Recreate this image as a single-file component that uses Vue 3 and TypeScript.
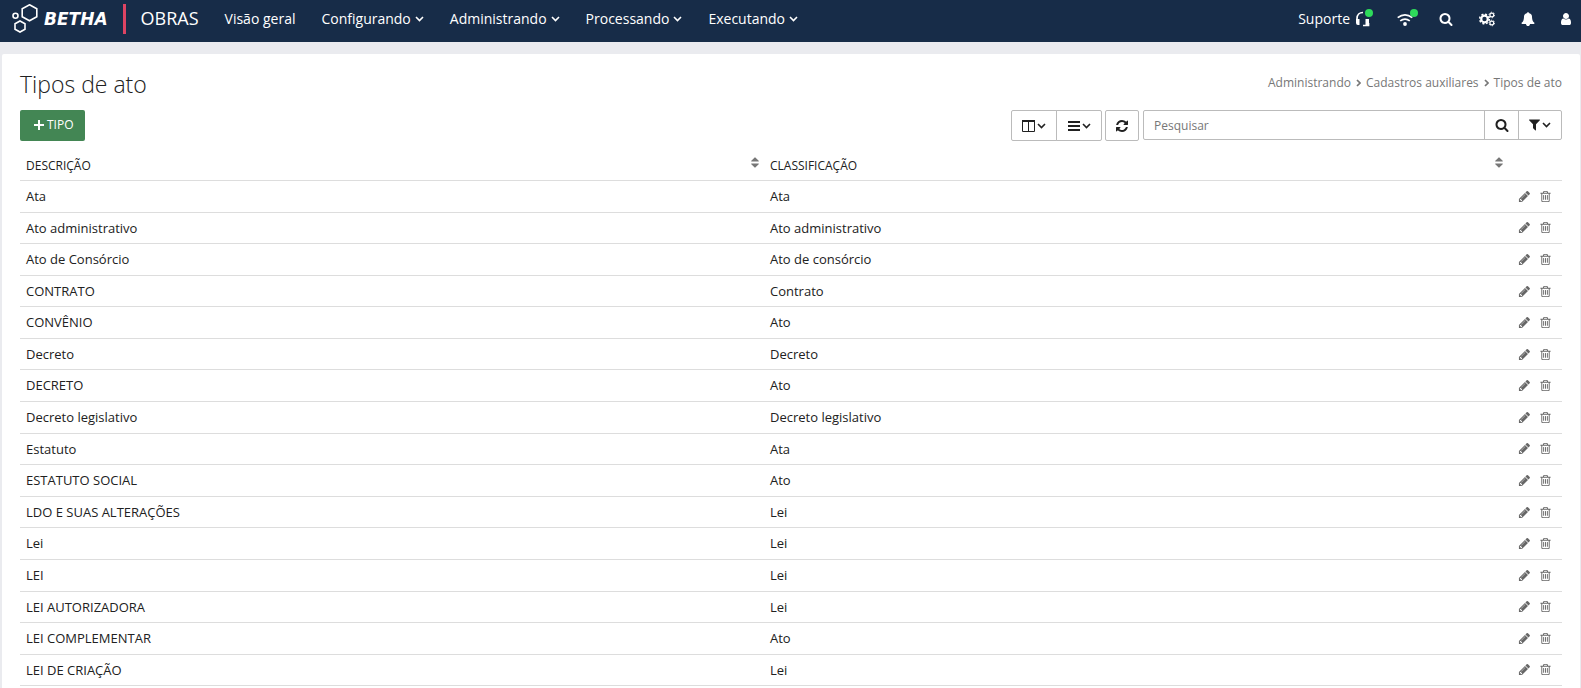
<script setup lang="ts">
import { ref } from 'vue'

interface TipoAto {
  descricao: string
  classificacao: string
}

const menus = ['Configurando', 'Administrando', 'Processando', 'Executando']
const pesquisa = ref('')

const tipos: TipoAto[] = [
  { descricao: 'Ata', classificacao: 'Ata' },
  { descricao: 'Ato administrativo', classificacao: 'Ato administrativo' },
  { descricao: 'Ato de Consórcio', classificacao: 'Ato de consórcio' },
  { descricao: 'CONTRATO', classificacao: 'Contrato' },
  { descricao: 'CONVÊNIO', classificacao: 'Ato' },
  { descricao: 'Decreto', classificacao: 'Decreto' },
  { descricao: 'DECRETO', classificacao: 'Ato' },
  { descricao: 'Decreto legislativo', classificacao: 'Decreto legislativo' },
  { descricao: 'Estatuto', classificacao: 'Ata' },
  { descricao: 'ESTATUTO SOCIAL', classificacao: 'Ato' },
  { descricao: 'LDO E SUAS ALTERAÇÕES', classificacao: 'Lei' },
  { descricao: 'Lei', classificacao: 'Lei' },
  { descricao: 'LEI', classificacao: 'Lei' },
  { descricao: 'LEI AUTORIZADORA', classificacao: 'Lei' },
  { descricao: 'LEI COMPLEMENTAR', classificacao: 'Ato' },
  { descricao: 'LEI DE CRIAÇÃO', classificacao: 'Lei' },
]

const icons = {
  search:
    'M1216 832q0-185-131.5-316.5t-316.5-131.5-316.5 131.5-131.5 316.5 131.5 316.5 316.5 131.5 316.5-131.5 131.5-316.5zm512 832q0 52-38 90t-90 38q-54 0-90-38l-343-342q-179 124-399 124-143 0-273.5-55.5t-225-150-150-225-55.5-273.5 55.5-273.5 150-225 225-150 273.5-55.5 273.5 55.5 225 150 150 225 55.5 273.5q0 220-124 399l343 343q37 37 37 90z',
  bell:
    'M1728 1408q0 52-38 90t-90 38h-448q0 106-75 181t-181 75-181-75-75-181h-448q-52 0-90-38t-38-90q50-42 91-88t85-119.5 74.5-158.5 50-206 19.5-260q0-152 117-282.5t307-158.5q-8-19-8-39 0-40 28-68t68-28 68 28 28 68q0 20-8 39 190 28 307 158.5t117 282.5q0 139 19.5 260t50 206 74.5 158.5 85 119.5 91 88z',
  user:
    'M1536 1399q0 109-62.5 187t-150.5 78h-854q-88 0-150.5-78t-62.5-187q0-85 8.5-160.5t31.5-152 58.5-131 94-89 134.5-34.5q131 128 313 128t313-128q76 0 134.5 34.5t94 89 58.5 131 31.5 152 8.5 160.5zm-256-887q0 159-112.5 271.5t-271.5 112.5-271.5-112.5-112.5-271.5 112.5-271.5 271.5-112.5 271.5 112.5 112.5 271.5z',
  filter:
    'M1595 295q17 41-14 70l-493 493v742q0 42-39 59-13 5-25 5-27 0-45-19l-256-256q-19-19-19-45v-486l-493-493q-31-29-14-70 17-39 59-39h1280q42 0 59 39z',
  refresh:
    'M1639 1056q0 5-1 7-64 268-268 434.5t-478 166.5q-146 0-282.5-55t-243.5-157l-129 129q-19 19-45 19t-45-19-19-45v-448q0-26 19-45t45-19h448q26 0 45 19t19 45-19 45l-137 137q71 66 161 102t187 36q134 0 250-65t186-179q11-17 53-117 8-23 30-23h192q13 0 22.5 9.5t9.5 22.5zm25-800v448q0 26-19 45t-45 19h-448q-26 0-45-19t-19-45 19-45l138-138q-148-137-349-137-134 0-250 65t-186 179q-11 17-53 117-8 23-30 23h-199q-13 0-22.5-9.5t-9.5-22.5v-7q65-268 270-434.5t480-166.5q146 0 284 55.5t245 156.5l130-129q19-19 45-19t45 19 19 45z',
  pencil:
    'M491 1536l91-91-235-235-91 91v107h128v128h107zm523-928q0-22-22-22-10 0-17 7l-542 542q-7 7-7 17 0 22 22 22 10 0 17-7l542-542q7-7 7-17zm-54-192l416 416-832 832h-416v-416zm683 96q0 53-37 90l-166 166-416-416 166-165q36-38 90-38 53 0 91 38l235 234q37 39 37 91z',
  trash:
    'M704 736v576q0 14-9 23t-23 9h-64q-14 0-23-9t-9-23v-576q0-14 9-23t23-9h64q14 0 23 9t9 23zm256 0v576q0 14-9 23t-23 9h-64q-14 0-23-9t-9-23v-576q0-14 9-23t23-9h64q14 0 23 9t9 23zm256 0v576q0 14-9 23t-23 9h-64q-14 0-23-9t-9-23v-576q0-14 9-23t23-9h64q14 0 23 9t9 23zm128 724v-948h-896v948q0 22 7 40.5t14.5 27 10.5 8.5h832q3 0 10.5-8.5t14.5-27 7-40.5zm-672-1076h448l-48-117q-7-9-17-11h-317q-10 2-17 11zm928 32v64q0 14-9 23t-23 9h-96v948q0 83-47 143.5t-113 60.5h-832q-66 0-113-58.5t-47-141.5v-952h-96q-14 0-23-9t-9-23v-64q0-14 9-23t23-9h309l70-167q15-37 54-63t79-26h320q40 0 79 26t54 63l70 167h309q14 0 23 9t9 23z',
  sort:
    'M1408 1088q0 26-19 45l-448 448q-19 19-45 19t-45-19l-448-448q-19-19-19-45t19-45 45-19h896q26 0 45 19t19 45zm0-384q0 26-19 45t-45 19h-896q-26 0-45-19t-19-45 19-45l448-448q19-19 45-19t45 19l448 448q19 19 19 45z',
}
</script>

<template>
  <div class="page">
    <header class="topbar">
      <a class="brand" href="#" aria-label="Betha Obras">
        <svg class="brand-mark" viewBox="0 0 26 30" aria-hidden="true">
          <path d="M17.5 .8l7.300 4v8l-7.300 4-7.300-4v-8zM8 17l5 2.700v5.600l-5 2.700-5-2.700v-5.600z" />
          <circle cx="3.500" cy="11.800" r="2.500" />
        </svg>
        <span class="brand-name">BETHA</span>
        <span class="divider"></span>
        <span class="product">OBRAS</span>
      </a>
      <nav class="menu">
        <a href="#">Visão geral</a>
        <button v-for="menu in menus" :key="menu" type="button">
          {{ menu }}
          <svg class="chevron" viewBox="0 0 9 6" aria-hidden="true"><path d="M1 1l3.500 3.500L8 1" /></svg>
        </button>
      </nav>
      <div class="tools">
        <button type="button" class="support">
          Suporte
          <svg class="icon-16" viewBox="0 0 16 16" aria-hidden="true">
            <path class="line" d="M2 9V7.500C2 4 4.500 1.500 8 1.500M13.500 12v2.500H8" />
            <path d="M1 8h3.500v6H3q-2 0-2-2zM10.500 8H14v6h-3.500z" />
          </svg>
          <span class="status"></span>
        </button>
        <button type="button" class="wifi" aria-label="Conexão">
          <svg class="icon-16" viewBox="0 0 16 16" aria-hidden="true">
            <path class="line" d="M.700 6.600q7.300-5.600 14.600 0M3.200 9.900q4.800-3.600 9.600 0" />
            <circle cx="8" cy="13" r="1.900" />
          </svg>
          <span class="status"></span>
        </button>
        <button type="button" aria-label="Pesquisar no sistema">
          <svg class="icon-14" viewBox="0 0 1792 1792" aria-hidden="true"><path :d="icons.search" /></svg>
        </button>
        <button type="button" aria-label="Configurações">
          <svg class="icon-16" viewBox="0 0 16 16" aria-hidden="true">
            <circle class="gear" cx="5.500" cy="8" r="3.300" />
            <circle class="teeth" cx="5.500" cy="8" r="4.800" stroke-dasharray="2 1.770" />
            <circle class="small-gear" cx="12.800" cy="4" r="1.900" />
            <circle class="small-teeth" cx="12.800" cy="4" r="2.800" />
            <circle class="small-gear" cx="12.800" cy="12" r="1.900" />
            <circle class="small-teeth" cx="12.800" cy="12" r="2.800" />
          </svg>
        </button>
        <button type="button" aria-label="Notificações">
          <svg class="icon-14" viewBox="0 0 1792 1792" aria-hidden="true"><path :d="icons.bell" /></svg>
        </button>
        <button type="button" aria-label="Usuário">
          <svg class="user" viewBox="256 128 1280 1536" aria-hidden="true"><path :d="icons.user" /></svg>
        </button>
      </div>
    </header>

    <main class="card">
      <div class="heading">
        <h1>Tipos de ato</h1>
        <nav class="breadcrumb" aria-label="Trilha">
          <a href="#">Administrando</a>
          <svg viewBox="0 0 5 8" aria-hidden="true"><path d="M1 1l3 3-3 3" /></svg>
          <a href="#">Cadastros auxiliares</a>
          <svg viewBox="0 0 5 8" aria-hidden="true"><path d="M1 1l3 3-3 3" /></svg>
          <span>Tipos de ato</span>
        </nav>
      </div>

      <div class="toolbar">
        <button type="button" class="add">
          <svg viewBox="0 0 10 10" aria-hidden="true"><path d="M5 0v10M0 5h10" /></svg>
          TIPO
        </button>
        <div class="actions">
          <div class="group">
            <button type="button" aria-label="Colunas">
              <svg class="columns" viewBox="0 0 13 12" aria-hidden="true">
                <path d="M.500 1v10.500h12V1M6.500 1v10.500" />
                <path class="bar" d="M0 1h13" />
              </svg>
              <svg class="chevron" viewBox="0 0 9 6" aria-hidden="true"><path d="M1 1l3.500 3.500L8 1" /></svg>
            </button>
            <button type="button" aria-label="Densidade">
              <svg class="bars" viewBox="0 0 12 12" aria-hidden="true">
                <path d="M0 2h12M0 6h12M0 10h12" />
              </svg>
              <svg class="chevron" viewBox="0 0 9 6" aria-hidden="true"><path d="M1 1l3.500 3.500L8 1" /></svg>
            </button>
          </div>
          <button type="button" class="refresh" aria-label="Atualizar">
            <svg class="icon-14" viewBox="0 0 1792 1792" aria-hidden="true"><path :d="icons.refresh" /></svg>
          </button>
          <form class="search" @submit.prevent>
            <input v-model="pesquisa" type="text" placeholder="Pesquisar" aria-label="Pesquisar" />
            <button type="submit" class="find" aria-label="Buscar">
              <svg class="icon-14" viewBox="0 0 1792 1792" aria-hidden="true"><path :d="icons.search" /></svg>
            </button>
            <button type="button" class="filter" aria-label="Filtros">
              <svg class="funnel" viewBox="192 192 1408 1536" aria-hidden="true"><path :d="icons.filter" /></svg>
              <svg class="chevron" viewBox="0 0 9 6" aria-hidden="true"><path d="M1 1l3.500 3.500L8 1" /></svg>
            </button>
          </form>
        </div>
      </div>

      <table>
        <thead>
          <tr>
            <th scope="col">
              <div class="sortable">
                DESCRIÇÃO
                <svg viewBox="384 160 1024 1472" aria-hidden="true"><path :d="icons.sort" /></svg>
              </div>
            </th>
            <th scope="col">
              <div class="sortable">
                CLASSIFICAÇÃO
                <svg viewBox="384 160 1024 1472" aria-hidden="true"><path :d="icons.sort" /></svg>
              </div>
            </th>
            <th class="row-tools"></th>
          </tr>
        </thead>
        <tbody>
          <tr v-for="tipo in tipos" :key="tipo.descricao">
            <td>{{ tipo.descricao }}</td>
            <td>{{ tipo.classificacao }}</td>
            <td class="row-tools">
              <div class="row-buttons">
                <button type="button" :aria-label="`Editar ${tipo.descricao}`">
                  <svg viewBox="0 0 1792 1792" aria-hidden="true"><path :d="icons.pencil" /></svg>
                </button>
                <button type="button" :aria-label="`Excluir ${tipo.descricao}`">
                  <svg viewBox="0 0 1792 1792" aria-hidden="true"><path :d="icons.trash" /></svg>
                </button>
              </div>
            </td>
          </tr>
        </tbody>
      </table>
    </main>
  </div>
</template>

<style>
body {
  margin: 0;
  background: #eaebef;
}
</style>

<style scoped>
.page {
  display: flex;
  flex-direction: column;
  min-height: 100vh;
  font-family: "Open Sans", "Noto Sans", sans-serif;
  font-size: 13px;
  line-height: 1.43;
  color: #212121;
}

* {
  box-sizing: border-box;
}

button {
  display: flex;
  align-items: center;
  margin: 0;
  padding: 0;
  border: 0;
  background: none;
  color: inherit;
  font: inherit;
  cursor: pointer;
}

a {
  color: inherit;
  text-decoration: none;
}

svg {
  display: block;
  flex: none;
  fill: currentColor;
}

.icon-14 {
  width: 14px;
  height: 14px;
}

.icon-16 {
  width: 16px;
  height: 16px;
}

.user {
  width: 10px;
  height: 12px;
}

.funnel {
  width: 11px;
  height: 12px;
}

.chevron {
  width: 9px;
  height: 6px;
  fill: none;
  stroke: currentColor;
  stroke-width: 1.6;
}

.topbar {
  display: flex;
  align-items: center;
  height: 42px;
  padding: 0 10px 4px 12px;
  background: #172c48;
  color: #fff;
  font-size: 14px;
}

.brand {
  display: flex;
  align-items: center;
}

.brand-mark {
  width: 26px;
  height: 30px;
  fill: none;
  stroke: #fff;
  stroke-width: 1.6;
}

.brand-name {
  margin-left: 6px;
  font-family: "DejaVu Sans", sans-serif;
  font-size: 17px;
  font-style: italic;
  font-weight: 700;
}

.divider {
  width: 3px;
  height: 30px;
  margin: 0 15px;
  background: #dd4463;
}

.product {
  font-size: 18px;
}

.menu {
  display: flex;
  gap: 26px;
  margin-left: 26px;
}

.menu button {
  gap: 4px;
}

.tools {
  display: flex;
  align-items: center;
  gap: 26px;
  margin-left: auto;
}

.support,
.wifi {
  position: relative;
  gap: 5px;
}

.line {
  fill: none;
  stroke: currentColor;
  stroke-width: 1.7;
}

.status {
  position: absolute;
  top: 0;
  right: -2px;
  width: 8px;
  height: 8px;
  border-radius: 50%;
  background: #2edb5b;
}

.wifi .status {
  top: -2px;
  right: -5px;
}

.gear,
.teeth,
.small-gear,
.small-teeth {
  fill: none;
  stroke: currentColor;
  stroke-width: 2.2;
}

.teeth {
  stroke-width: 1.6;
}

.small-gear {
  stroke-width: 1.2;
}

.small-teeth {
  stroke-width: 1;
  stroke-dasharray: 1.3 1.63;
}

.card {
  flex: 1;
  margin: 12px 1px 0 2px;
  padding: 16px 18px 0;
  border-radius: 2px 2px 0 0;
  background: #fff;
}

.heading {
  display: flex;
  justify-content: space-between;
  height: 40px;
}

h1 {
  margin: 0;
  font-size: 23px;
  font-weight: 300;
  line-height: 28px;
}

.breadcrumb {
  display: flex;
  align-items: center;
  gap: 5px;
  height: 26px;
  color: #777;
  font-size: 12px;
}

.breadcrumb svg {
  width: 5px;
  height: 8px;
  fill: none;
  stroke: currentColor;
  stroke-width: 1.7;
}

.toolbar {
  display: flex;
  justify-content: space-between;
  align-items: flex-start;
}

.add {
  gap: 3px;
  height: 31px;
  padding: 0 11px 2px 14px;
  border-radius: 2px;
  background: #438654;
  color: #fff;
  font-size: 12px;
}

.add svg {
  width: 10px;
  height: 10px;
  stroke: currentColor;
  stroke-width: 2;
}

.actions {
  display: flex;
  width: 551px;
}

.group {
  display: flex;
  flex: none;
}

.group button,
.refresh {
  justify-content: center;
  gap: 3px;
  width: 46px;
  height: 31px;
  border: 1px solid #bbb;
  border-radius: 2px 0 0 2px;
}

.group button + button {
  margin-left: -1px;
  border-radius: 0 2px 2px 0;
}

.group button,
.filter {
  gap: 2px;
}

.refresh {
  flex: none;
  width: 34px;
  margin: 0 4px 0 3px;
  border-radius: 2px;
}

.columns {
  width: 13px;
  height: 12px;
  fill: none;
  stroke: currentColor;
  stroke-width: 1;
}

.columns .bar {
  stroke-width: 2;
}

.bars {
  width: 12px;
  height: 12px;
  stroke: currentColor;
  stroke-width: 2;
}

.search {
  display: flex;
  flex: 1;
  height: 30px;
  border: 1px solid #bbb;
  border-radius: 2px;
}

.search input {
  flex: 1;
  min-width: 0;
  padding: 2px 10px 0;
  border: 0;
  outline: 0;
  background: none;
  color: inherit;
  font: inherit;
  font-size: 12px;
}

.search input::placeholder {
  color: #777;
  opacity: 1;
}

.find,
.filter {
  justify-content: center;
  width: 34px;
  border-left: 1px solid #bbb;
}

.filter {
  width: 43px;
}

table {
  width: 100%;
  margin-top: 8px;
  border-collapse: separate;
  border-spacing: 0;
  table-layout: fixed;
}

th,
td {
  padding: 6px;
  border-bottom: 1px solid #ddd;
  text-align: left;
}

th {
  padding: 7px 5px 5px 6px;
  font-size: 12px;
  font-weight: 500;
  line-height: 19px;
}

.sortable {
  display: flex;
  justify-content: space-between;
}

.sortable svg {
  width: 8px;
  height: 11px;
  margin-top: 1px;
  color: #777;
}

.row-tools {
  width: 54px;
}

.row-buttons {
  display: flex;
  gap: 8px;
  padding-left: 4px;
  color: #666;
}

.row-buttons svg {
  width: 13px;
  height: 13px;
}
</style>
